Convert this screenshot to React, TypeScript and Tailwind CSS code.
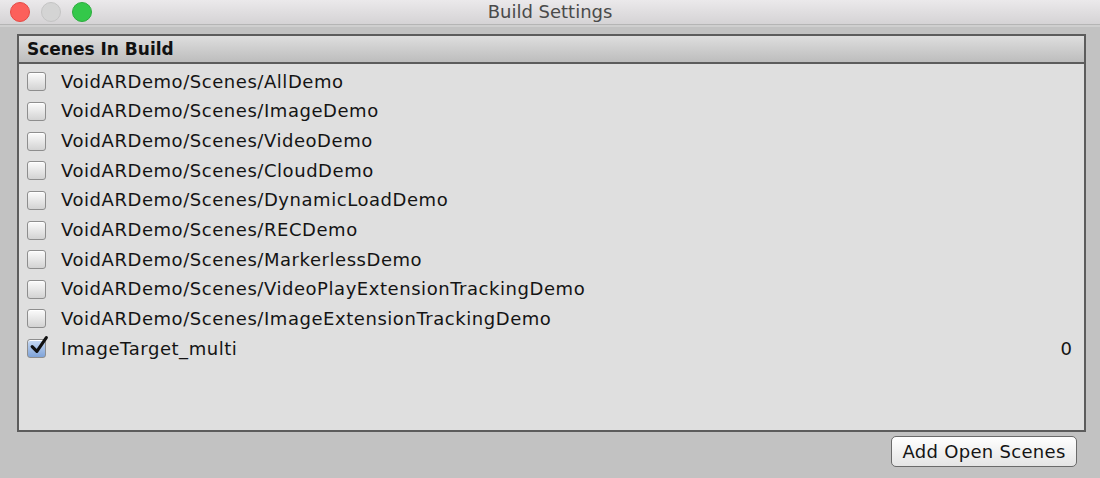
import React from 'react';

const scenes = [
  { name: 'VoidARDemo/Scenes/AllDemo', checked: false },
  { name: 'VoidARDemo/Scenes/ImageDemo', checked: false },
  { name: 'VoidARDemo/Scenes/VideoDemo', checked: false },
  { name: 'VoidARDemo/Scenes/CloudDemo', checked: false },
  { name: 'VoidARDemo/Scenes/DynamicLoadDemo', checked: false },
  { name: 'VoidARDemo/Scenes/RECDemo', checked: false },
  { name: 'VoidARDemo/Scenes/MarkerlessDemo', checked: false },
  { name: 'VoidARDemo/Scenes/VideoPlayExtensionTrackingDemo', checked: false },
  { name: 'VoidARDemo/Scenes/ImageExtensionTrackingDemo', checked: false },
  { name: 'ImageTarget_multi', checked: true, index: '0' },
];

const Checkbox: React.FC<{ checked: boolean }> = ({ checked }) => (
  <div
    className={`relative w-[19px] h-[19px] rounded-[3px] border border-[#8e8e8e] shadow-[inset_0_1px_0_#fff] ${
      checked
        ? 'bg-gradient-to-b from-[#c8daf3] to-[#7fa3d8]'
        : 'bg-gradient-to-b from-[#fbfbfb] to-[#d3d3d3]'
    }`}
  >
    {checked && (
      <svg viewBox="0 0 20 20" className="absolute -top-[5px] left-[1px] w-[21px] h-[21px]">
        <path d="M3 11 L7.5 15.5 L16.5 2.5" fill="none" stroke="#111" strokeWidth="3" strokeLinecap="round" strokeLinejoin="round" />
      </svg>
    )}
  </div>
);

export default function App() {
  return (
    <div className="w-[1100px] h-[478px] bg-[#c2c2c2] flex flex-col overflow-hidden" style={{ fontFamily: '"DejaVu Sans", "Open Sans", sans-serif' }}>
      {/* title bar */}
      <div className="relative h-[25px] bg-gradient-to-b from-[#ebe9eb] to-[#d5d3d5] border-b border-[#b5b5b5] flex items-center justify-center shrink-0">
        <div className="absolute left-[10px] top-[2px] flex gap-[11px]">
          <div className="w-[20px] h-[20px] rounded-full bg-[#fc605b] border border-[#e54a45]" />
          <div className="w-[20px] h-[20px] rounded-full bg-[#d4d4d4] border border-[#c4c4c4]" />
          <div className="w-[20px] h-[20px] rounded-full bg-[#34c84a] border border-[#2cac3e]" />
        </div>
        <span className="text-[18px] text-[#4a4a4a] leading-none">Build Settings</span>
      </div>
      <div className="h-[2px] bg-[#cfcfcf]" />

      {/* scenes panel */}
      <div className="mt-[7px] ml-[17px] w-[1069px] h-[398px] border-2 border-[#5c5c5c] bg-[#dfdfdf] flex flex-col">
        <div className="h-[28px] shrink-0 bg-gradient-to-b from-[#dedede] to-[#bdbdbd] border-b-2 border-[#5c5c5c] flex items-center px-[8px]">
          <span className="text-[17px] font-bold text-[#111] leading-none">Scenes In Build</span>
        </div>
        <div className="pt-[3px]">
          {scenes.map((s) => (
            <div key={s.name} className="h-[29.65px] flex items-center pl-[8px] pr-[12px]">
              <Checkbox checked={s.checked} />
              <span className="ml-[15px] text-[18px] tracking-[0.55px] text-[#141414] leading-none">{s.name}</span>
              {s.index && <span className="ml-auto text-[18px] text-[#141414] leading-none">{s.index}</span>}
            </div>
          ))}
        </div>
      </div>

      <div className="flex justify-end pr-[23px] mt-[4px]">
        <button className="w-[186px] h-[31px] rounded-[5px] border border-[#6a6a6a] bg-gradient-to-b from-[#ffffff] to-[#e4e4e4] text-[18px] tracking-[0.3px] text-[#141414] leading-none flex items-center justify-center">
          Add Open Scenes
        </button>
      </div>
    </div>
  );
}
